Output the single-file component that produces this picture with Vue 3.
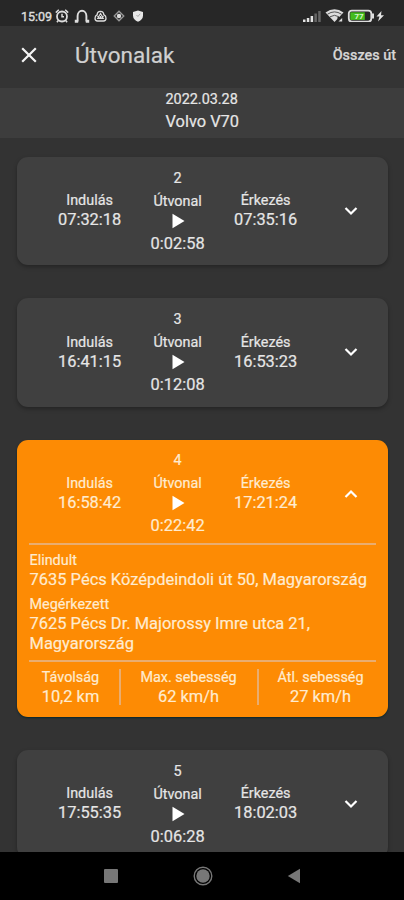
<script setup>
import { ref } from 'vue';

const routes = ref([
  { id: 2, start: '07:32:18', end: '07:35:16', time: '0:02:58', open: false },
  { id: 3, start: '16:41:15', end: '16:53:23', time: '0:12:08', open: false },
  {
    id: 4,
    start: '16:58:42',
    end: '17:21:24',
    time: '0:22:42',
    open: true,
    from: '7635 Pécs Középdeindoli út 50, Magyarország',
    to: '7625 Pécs Dr. Majorossy Imre utca 21, Magyarország',
    distance: '10,2 km',
    maxSpeed: '62 km/h',
    avgSpeed: '27 km/h'
  },
  { id: 5, start: '17:55:35', end: '18:02:03', time: '0:06:28', open: false },
]);

const toggle = route => {
  if (route.from) route.open = !route.open;
};
</script>

<template>
  <div class="screen">

    <!-- Status bar -->
    <div class="status">
      <span class="clock">15:09</span>
      <svg class="status-left" width="96" height="16" viewBox="0 0 96 16" fill="none" stroke="#ddd">
        <circle cx="8" cy="8.5" r="5" stroke-width="1.8" />
        <path d="M8 5.8v3h2M1.8 4.6l3-2.8M14.2 4.6l-3-2.8M4.3 12.5l-1.4 1.7M11.7 12.5l1.4 1.7" stroke-width="1.5" />
        <path d="M23.6 13.5V8a4.4 5.2 0 0 1 8.8 0v5.5" stroke-width="1.9" />
        <path d="M20.8 13.3h3.4M31.8 13.3h3.4" stroke-width="3" />
        <path d="M46.5 3.3c2 0 3.2 1.5 3.3 3.3 1.8.9 2.3 2.2 2.2 3.7 0 1.7-1 2.7-2.5 2.7h-6c-1.5 0-2.5-1-2.5-2.7 0-1.5.5-2.8 2.2-3.7 0-1.8 1.2-3.3 3.3-3.3z" stroke-width="1.3" />
        <path d="M46.5 5.5l-2.8 5h5.6zM46.5 8v3M43.5 8l2 2M49.5 8l-2 2" stroke-width="1.1" />
        <path d="M65 3.2l4.800 4.800-4.800 4.800L60.200 8z" stroke="#999" stroke-width="1.3" />
        <circle cx="65" cy="8" r="2.2" fill="#ddd" stroke="none" />
        <path d="M84 2.500l5 1.500v3.800c0 2.800-2 4.700-5 6-3-1.300-5-3.200-5-6V4z" fill="#e6e6e6" stroke="none" />
        <path d="M82.5 7l1.400 1.500 2.300-2.700" stroke="#999" stroke-width=".8" />
      </svg>
      <svg class="status-right" width="84" height="16" viewBox="0 0 84 16" fill="none">
        <path d="M1 16v-2.600h2.500V16zM4.800 16v-4h2.500v4zM8.600 16v-6h2.500v6z" fill="#e4e4e4" />
        <path d="M12.400 16V7.500h2.500V16zM16.200 16V5h2.500v11z" fill="#666" />
        <path d="M23.500 6.400q9-6.400 18 0L32.500 16z" fill="#ddd" />
        <path d="M25.500 8.200q7-4.600 14 0M28 10.800q4.500-3 9 0" stroke="#555" stroke-width="1" />
        <path d="M35.500 11h5v5h-5z" fill="#272727" />
        <path d="M36.500 15.500l3.700-3.500v3.500z" fill="#ddd" />
        <rect x="46.800" y="4.600" width="22.500" height="11" rx="3" stroke="#ddd" stroke-width="1.800" />
        <path d="M70 7.500h2v5h-2z" fill="#ddd" />
        <path d="M48.300 6.300h14.500v7.600H48.300z" fill="#43bc1c" />
        <text x="52.500" y="13" font-size="8" font-weight="700" fill="#d6f5c9">77</text>
        <path d="M79.500 5L74.500 10.600h3L76 15.500 82 9.300h-3z" fill="#e4e4e4" />
      </svg>
    </div>

    <!-- App bar -->
    <header class="appbar">
      <svg class="close" width="18" height="18" viewBox="0 0 18 18">
        <path d="M2.200 2.200l13.600 13.600M15.800 2.200L2.200 15.800" stroke="#f4f4f4" stroke-width="2.200" />
      </svg>
      <h1>Útvonalak</h1>
      <span class="all">Összes út</span>
    </header>

    <div class="day">
      <div class="day-text">
        <div class="date">2022.03.28</div>
        <div class="car">Volvo V70</div>
      </div>
    </div>

    <!-- Routes -->
    <main class="list">
      <section v-for="route in routes" :key="route.id" class="card" :class="{ 'card-open': route.open }">
        <div class="summary" @click="toggle(route)">
          <div class="side">
            <div class="label">Indulás</div>
            <div class="value">{{ route.start }}</div>
          </div>
          <div class="middle">
            <div class="label number">{{ route.id }}</div>
            <div class="label">Útvonal</div>
            <svg class="play" width="14" height="16" viewBox="0 0 14 16">
              <path d="M1.5 .7L13.5 8 1.5 15.3z" fill="#fff" />
            </svg>
            <div class="value">{{ route.time }}</div>
          </div>
          <div class="side">
            <div class="label">Érkezés</div>
            <div class="value">{{ route.end }}</div>
          </div>
          <svg class="chevron" :class="{ up: route.open }" width="14" height="10" viewBox="0 0 14 10">
            <path d="M1.5 2L7 7.5 12.5 2" fill="none" stroke="#fff" stroke-width="2.2" />
          </svg>
        </div>

        <div v-if="route.open" class="details">
          <div class="address">
            <div class="label">Elindult</div>
            <div class="value">{{ route.from }}</div>
          </div>
          <div class="address">
            <div class="label">Megérkezett</div>
            <div class="value">{{ route.to }}</div>
          </div>
          <div class="stats">
            <div class="stat distance">
              <div class="label">Távolság</div>
              <div class="value">{{ route.distance }}</div>
            </div>
            <div class="stat max">
              <div class="label">Max. sebesség</div>
              <div class="value">{{ route.maxSpeed }}</div>
            </div>
            <div class="stat avg">
              <div class="label">Átl. sebesség</div>
              <div class="value">{{ route.avgSpeed }}</div>
            </div>
          </div>
        </div>
      </section>
    </main>

    <!-- Navigation bar -->
    <nav class="navbar">
      <svg width="14" height="14" viewBox="0 0 14 14">
        <rect width="14" height="14" rx="1" fill="#777" />
      </svg>
      <svg width="20" height="20" viewBox="0 0 20 20">
        <circle cx="10" cy="10" r="8.8" fill="none" stroke="#777" stroke-width="1.4" />
        <circle cx="10" cy="10" r="6.7" fill="#777" />
      </svg>
      <svg width="14" height="16" viewBox="0 0 14 16">
        <path d="M13 .8v14.4L.8 8z" fill="#777" />
      </svg>
    </nav>
  </div>
</template>

<style>
body {
  margin: 0;
  background: #333;
}
</style>

<style scoped>
.screen {
  width: 404px;
  height: 900px;
  display: flex;
  flex-direction: column;
  overflow: hidden;
  background: #333;
  color: #e6e6e6;
  font-family: Roboto, sans-serif;
  -webkit-text-stroke: .2px currentColor;
}

.screen svg {
  display: block;
  flex: none;
}

.status {
  flex: none;
  height: 26px;
  box-sizing: border-box;
  padding: 7px 18px 0 21px;
  display: flex;
  background: #272727;
}

.clock {
  width: 33px;
  font-size: 12.5px;
  line-height: 20px;
  color: #ddd;
  -webkit-text-stroke: .4px currentColor;
}

.status-left {
  margin-top: 1px;
}

.status-right {
  margin: -1px 0 0 auto;
}

.appbar {
  flex: none;
  height: 62px;
  box-sizing: border-box;
  padding: 0 8px 4px 20px;
  display: flex;
  align-items: center;
  background: #343434;
}

.appbar h1 {
  margin: 0 0 0 37px;
  font-size: 22.5px;
  font-weight: 400;
  color: #d0d0d0;
}

.all {
  margin-left: auto;
  font-size: 14.4px;
  font-weight: 500;
  color: #d6d6d6;
}

.day {
  flex: none;
  height: 50px;
  box-sizing: border-box;
  display: flex;
  padding: 1px 0 0 165.5px;
  background: #3d3d3d;
}

.date {
  font-size: 14.4px;
  line-height: 21px;
}

.car {
  font-size: 16.4px;
  line-height: 23px;
}

.list {
  flex: 1;
  min-height: 0;
  overflow: hidden;
  padding: 19px 16px 0 17px;
  display: flex;
  flex-direction: column;
  gap: 33px;
}

.card {
  flex: none;
  border-radius: 11px;
  background: #404040;
  box-shadow: 0 2px 4px rgba(0, 0, 0, .3);
}

.card-open {
  background: #fd8b04;
  color: #ffebd0;
  box-shadow: 0 1px 2px #08262b;
}

.summary {
  height: 108.3px;
  display: grid;
  grid-template-columns: 88px 88px 88px 1fr;
  padding: 0 0 0 28.6px;
  box-sizing: border-box;
  align-items: center;
  text-align: center;
  cursor: pointer;
}

.label {
  font-size: 14.4px;
  line-height: 18px;
}

.value {
  font-size: 16.4px;
  line-height: 20px;
}

.side {
  padding-top: .6px;
}

.middle {
  padding-top: 1px;
}

.middle .label.number {
  margin-bottom: 5px;
}

.middle .play {
  margin: 2px auto 5px;
}

.chevron {
  justify-self: center;
  margin-left: 4px;
}

.chevron.up {
  transform: rotate(180deg);
}

.details {
  margin: -5px 12px 0;
  border-top: 2px solid #e9ad70;
  padding: 7px 0 12px;
}

.address {
  margin-bottom: 6px;
  padding-left: .5px;
}

.address .value {
  font-size: 16.48px;
}

.stats {
  margin-top: 5px;
  border-top: 2px solid #e9ad70;
  padding-top: 7px;
  display: flex;
  text-align: center;
}

.stat {
  box-sizing: border-box;
  height: 36px;
}

.stat + .stat {
  border-left: 2px solid #e9ad70;
}

.distance {
  width: 90px;
  padding-right: 7px;
}

.max {
  width: 138px;
  padding-right: 1px;
}

.avg {
  flex: 1;
  padding-left: 6px;
}

.navbar {
  flex: none;
  height: 48px;
  display: grid;
  grid-template-columns: 58px 126px 56px;
  justify-content: center;
  align-items: center;
  justify-items: center;
  background: #000;
}
</style>
